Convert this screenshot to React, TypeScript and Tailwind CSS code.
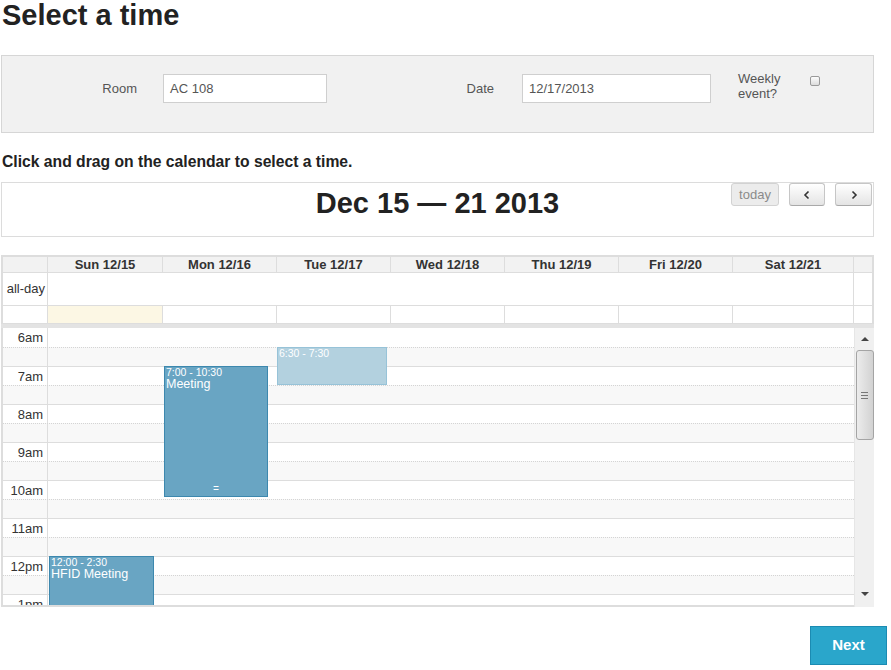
const days = ["Sun 12/15", "Mon 12/16", "Tue 12/17", "Wed 12/18", "Thu 12/19", "Fri 12/20", "Sat 12/21"];
const hours = ["6am", "7am", "8am", "9am", "10am", "11am", "12pm", "1pm"];

const cols = "grid grid-cols-[44px_115px_114px_114px_114px_114px_114px_121px_18px]";

const Chevron = ({ dir }: { dir: "left" | "right" }) => (
  <svg width="8" height="10" viewBox="0 0 8 10" fill="none">
    <path
      d={dir === "left" ? "M5.5 1.5 L2 5 L5.5 8.5" : "M2.5 1.5 L6 5 L2.5 8.5"}
      stroke="#333"
      strokeWidth="1.6"
    />
  </svg>
);

const App = () => {
  return (
    <div className="w-[891px] h-[670px] overflow-hidden bg-white text-[#333] font-['Liberation_Sans',Arial,sans-serif]">
      <h1 className="pl-[2px] text-[29px] leading-[30px] font-bold text-[#222]">Select a time</h1>

      {/* Form */}
      <div className="mt-[25px] ml-[1px] w-[873px] h-[78px] border border-[#d6d6d6] bg-[#f1f1f1] flex items-start pt-[18px] text-[13px] text-[#555]">
        <div className="w-[135px] h-[29px] leading-[29px] text-right">Room</div>
        <div className="ml-[26px] w-[164px] h-[29px] leading-[27px] border border-[#cfcfcf] bg-white px-[6px]">AC 108</div>
        <div className="w-[167px] h-[29px] leading-[29px] text-right">Date</div>
        <div className="ml-[28px] w-[189px] h-[29px] leading-[27px] border border-[#cfcfcf] bg-white px-[6px]">12/17/2013</div>
        <div className="ml-[27px] w-[72px] -mt-[2px] leading-[14.5px]">
          Weekly
          <br />
          event?
        </div>
        <div className="mt-[2px] w-[10px] h-[10px] rounded-[2px] border border-[#9a9a9a] bg-linear-to-b from-[#fdfdfd] to-[#dcdcdc]" />
      </div>

      <p className="mt-[20px] pl-[2px] text-[15.7px] leading-[18px] font-bold text-[#222]">
        Click and drag on the calendar to select a time.
      </p>

      {/* Calendar header */}
      <div className="mt-[11px] ml-[1px] w-[873px] h-[55px] border border-[#dcdcdc] grid grid-cols-[1fr_auto_1fr] items-start">
        <div />
        <h2 className="mt-[5px] text-[29px] leading-[30px] font-bold text-[#222]">Dec 15 — 21 2013</h2>
        <div className="flex justify-end gap-[10px] pr-[1px]">
          <div className="w-[48px] h-[23px] rounded-[3px] border border-[#d2d2d2] bg-[#ececec] text-[13px] leading-[21px] text-center text-[#8a8a8a]">
            today
          </div>
          <div className="w-[36px] h-[23px] rounded-[3px] border border-[#c6c6c6] border-b-[#a9a9a9] bg-linear-to-b from-[#ffffff] to-[#e4e4e4] flex items-center justify-center">
            <Chevron dir="left" />
          </div>
          <div className="w-[37px] h-[23px] rounded-[3px] border border-[#c6c6c6] border-b-[#a9a9a9] bg-linear-to-b from-[#ffffff] to-[#e4e4e4] flex items-center justify-center">
            <Chevron dir="right" />
          </div>
        </div>
      </div>

      {/* Calendar */}
      <div className="mt-[18px] ml-[1px] w-[873px]">
        <div className="border-2 border-b-0 border-[#dddddd]">
          <div className={`${cols} h-[16px] bg-[#f2f2f2] border-b border-[#dddddd] text-[13px] leading-[15px] font-bold`}>
            <div />
            {days.map((d) => (
              <div key={d} className="border-l border-[#dddddd] text-center">
                {d}
              </div>
            ))}
            <div className="border-l border-[#dddddd]" />
          </div>
          <div className={`${cols} h-[33px] border-b border-[#dddddd]`}>
            <div className="flex items-center justify-end pr-[2px] text-[13px]">all-day</div>
            <div className="col-span-7 border-l border-[#dddddd]" />
            <div className="border-l border-[#dddddd]" />
          </div>
          <div className={`${cols} h-[18px] border-b border-[#dddddd]`}>
            <div />
            {days.map((d, i) => (
              <div key={d} className={i === 0 ? "border-l border-[#dddddd] bg-[#fcf7e4]" : "border-l border-[#dddddd]"} />
            ))}
            <div className="border-l border-[#dddddd]" />
          </div>
        </div>
        <div className="h-[4px] bg-[#e3e3e3]" />

        <div className="flex h-[279px]">
          <div className="relative w-[853px] border-l-2 border-b-2 border-[#dddddd] overflow-hidden">
            {hours.map((h, i) => (
              <div key={h}>
                <div className={i === 0 ? "flex h-[19px]" : "flex h-[19px] border-t border-[#dddddd]"}>
                  <div className="w-[44px] pr-[4px] text-right text-[13px] leading-[19px]">{h}</div>
                  <div className="flex-1 border-l border-[#dddddd]" />
                </div>
                <div className="flex h-[19px] border-t border-dotted border-[#d4d4d4] bg-[#f8f8f8]">
                  <div className="w-[44px]" />
                  <div className="flex-1 border-l border-[#dddddd]" />
                </div>
              </div>
            ))}

            {/* Events */}
            <div className="absolute left-[274px] top-[19px] w-[110px] h-[38px] border border-[#97c3d8] bg-[#b3d1df] text-white px-[1px]">
              <div className="text-[10.5px] leading-[11px]">6:30 - 7:30</div>
            </div>
            <div className="absolute left-[161px] top-[38px] w-[104px] h-[131px] border border-[#3d88ae] bg-[#69a5c3] text-white px-[1px]">
              <div className="text-[10.5px] leading-[11px]">7:00 - 10:30</div>
              <div className="text-[12.5px] leading-[13px]">Meeting</div>
              <div className="absolute bottom-[1px] inset-x-0 text-center text-[10px] leading-[10px] font-['Liberation_Mono',monospace]">=</div>
            </div>
            <div className="absolute left-[46px] top-[228px] w-[105px] h-[93px] border border-[#3d88ae] bg-[#69a5c3] text-white px-[1px]">
              <div className="text-[10.5px] leading-[11px]">12:00 - 2:30</div>
              <div className="text-[12.5px] leading-[13px]">HFID Meeting</div>
            </div>
          </div>

          {/* Scrollbar */}
          <div className="w-[20px] h-[279px] bg-[#f0f0f0] border-l border-[#e6e6e6] flex flex-col items-center">
            <div className="h-[22px] flex items-center justify-center">
              <div className="w-0 h-0 border-x-[4px] border-x-transparent border-b-[4px] border-b-[#444]" />
            </div>
            <div className="w-[18px] h-[90px] rounded-[3px] border border-[#a4a4a4] bg-linear-to-r from-[#ececec] to-[#d2d2d2] flex flex-col items-center justify-center gap-[2px]">
              <div className="w-[7px] h-px bg-[#777]" />
              <div className="w-[7px] h-px bg-[#777]" />
              <div className="w-[7px] h-px bg-[#777]" />
            </div>
            <div className="flex-1" />
            <div className="h-[26px] flex items-center justify-center">
              <div className="w-0 h-0 border-x-[4px] border-x-transparent border-t-[4px] border-t-[#444]" />
            </div>
          </div>
        </div>
      </div>

      <div className="mt-[19px] flex justify-end pr-[4px]">
        <div className="w-[77px] h-[39px] border border-[#1b8bb2] bg-[#2aa6cb] text-white text-[15px] font-bold flex items-center justify-center">
          Next
        </div>
      </div>
    </div>
  );
};

export default App;
